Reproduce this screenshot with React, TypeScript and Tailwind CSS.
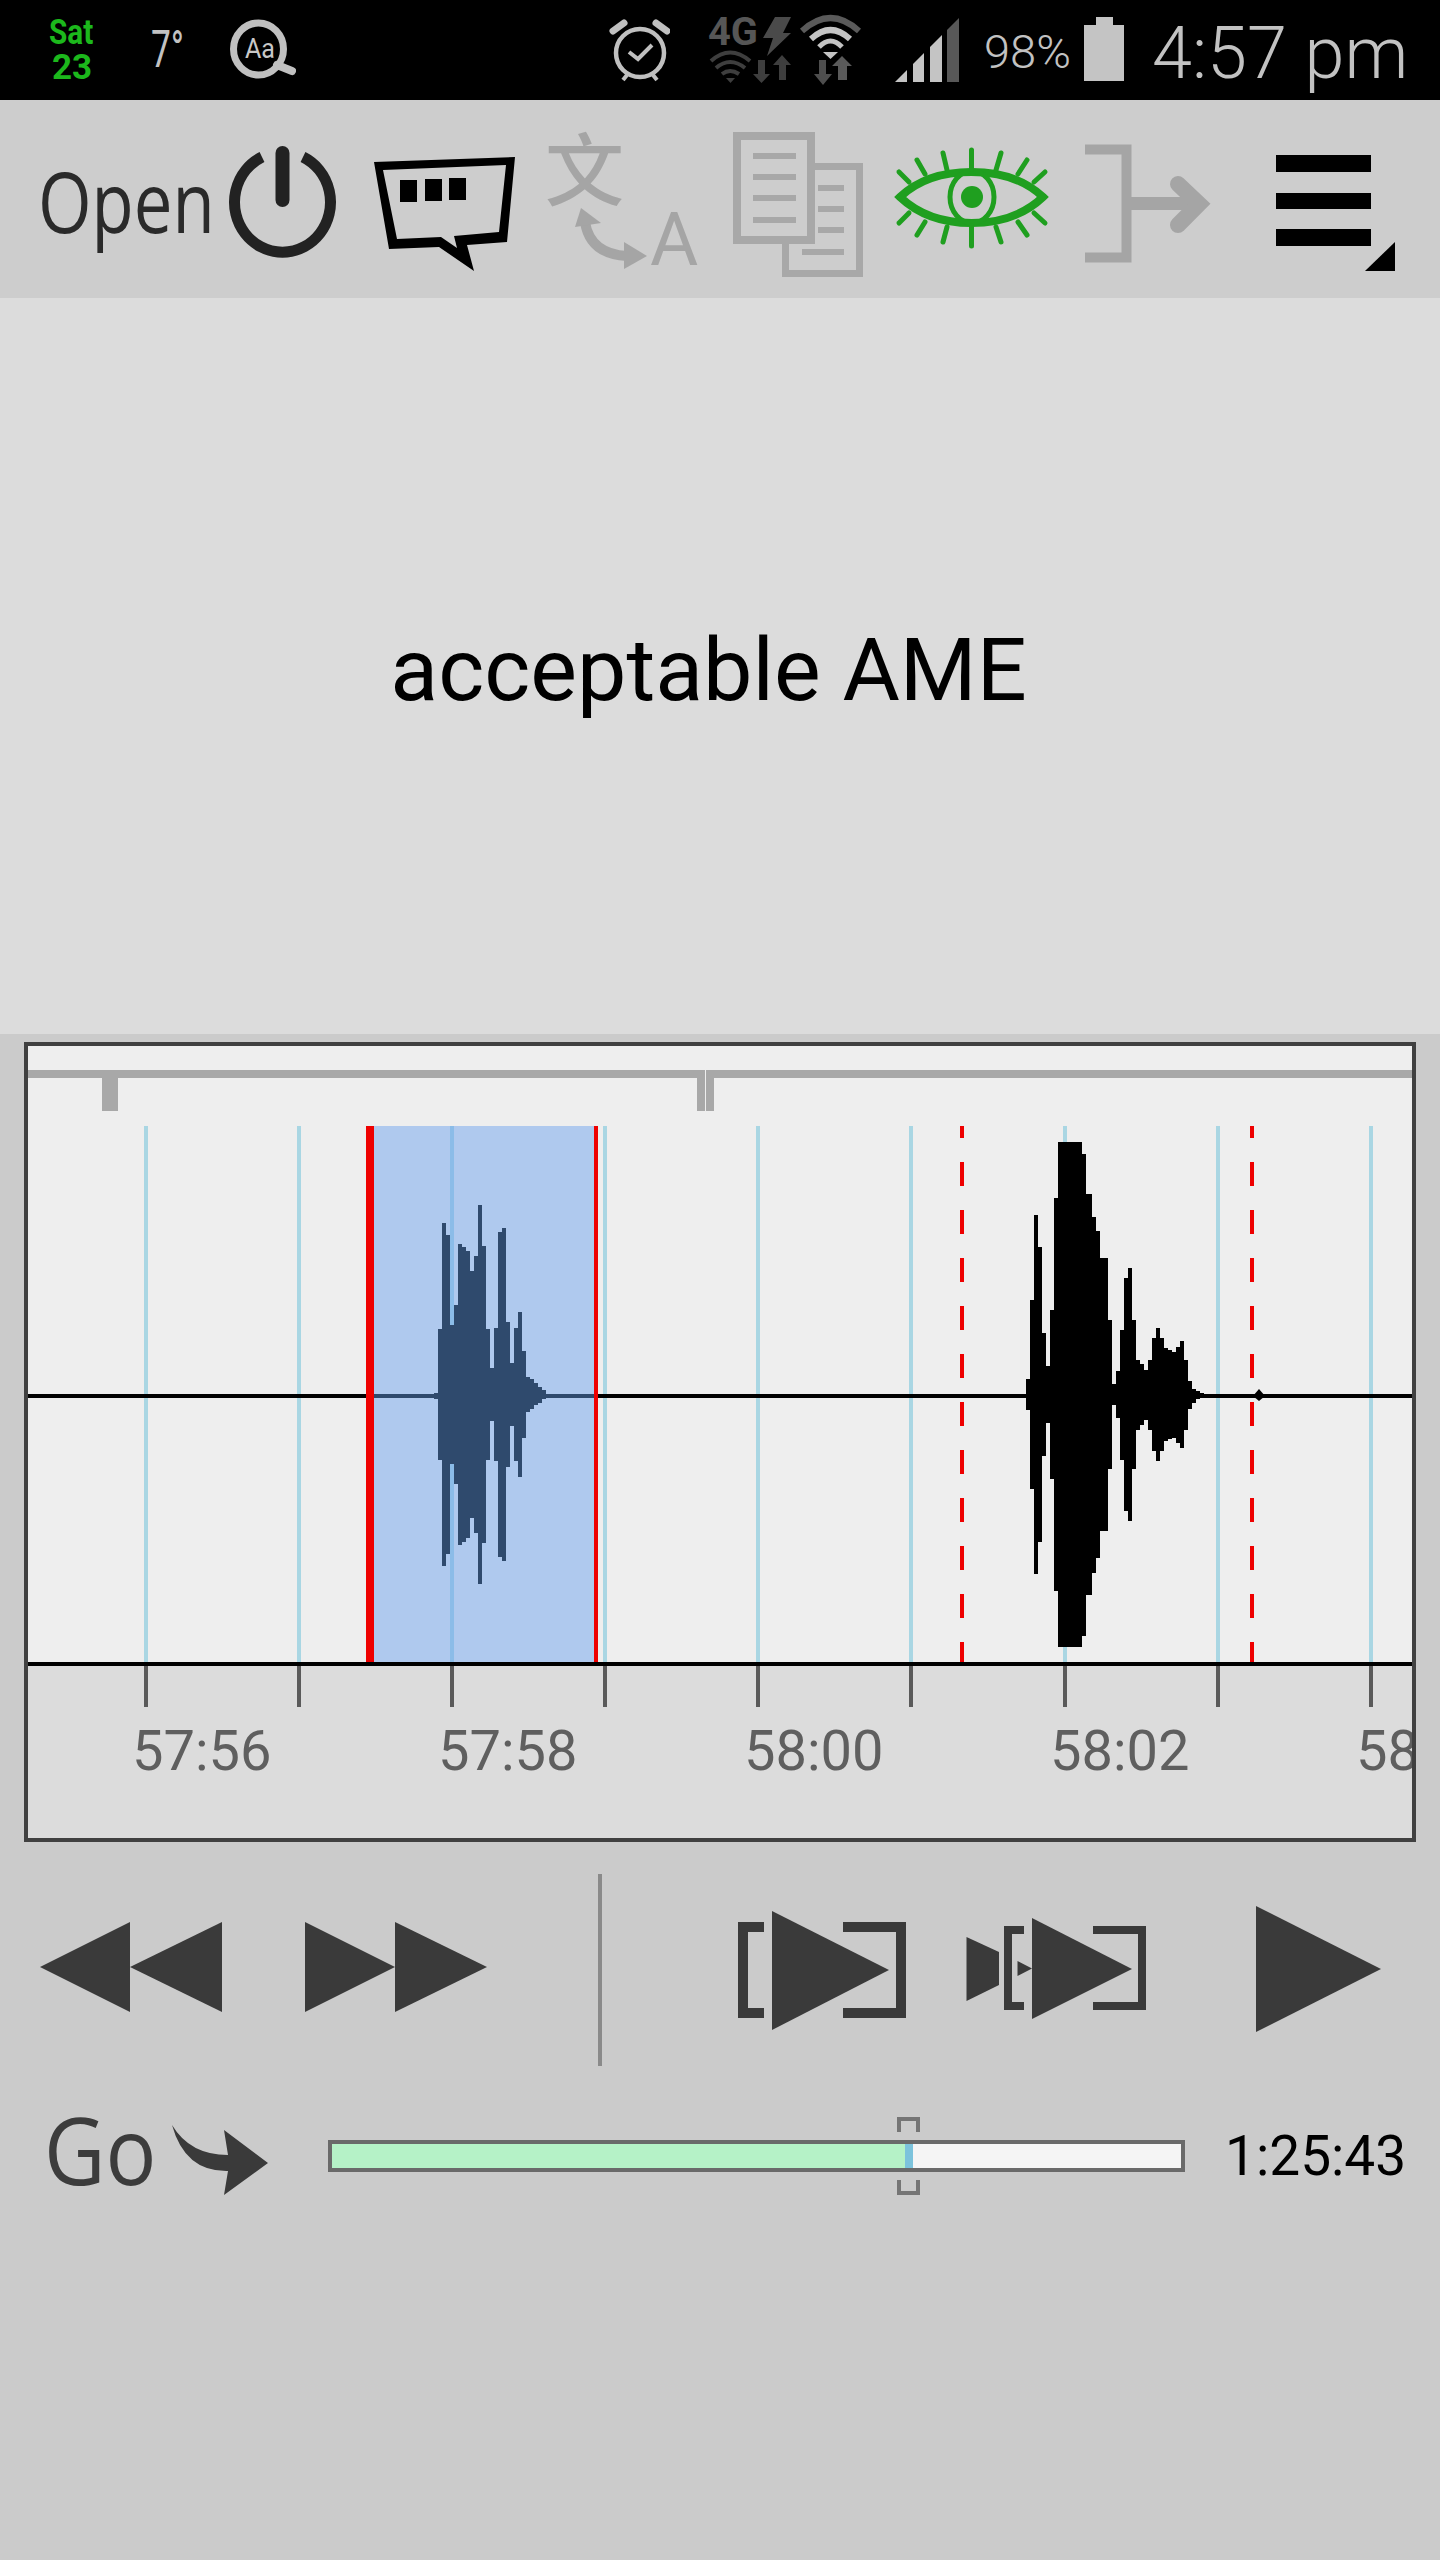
// svg icons use page coordinates in their viewBox, so numbers can be read straight off the screenshot
const gridX = [144, 297, 450, 603, 756, 909, 1063, 1216, 1369];

// [x, amplitude above centre, amplitude below centre], each column runs to the next x
const selectedWave: number[][] = [
  [434, 3, 3], [438, 67, 64], [442, 173, 170], [446, 161, 158], [450, 71, 68], [454, 91, 88],
  [458, 152, 149], [462, 149, 146], [466, 145, 142], [470, 125, 122], [474, 140, 137], [478, 191, 188],
  [482, 150, 147], [486, 67, 64], [490, 28, 25], [494, 68, 65], [498, 164, 161], [502, 168, 165],
  [506, 74, 71], [510, 33, 30], [514, 68, 65], [518, 84, 81], [522, 45, 42], [526, 19, 16],
  [530, 17, 13], [534, 13, 9], [538, 9, 7], [542, 6, 3], [546, 0, 0],
];

const blackWave: number[][] = [
  [1026, 17, 14], [1030, 96, 93], [1034, 181, 178], [1038, 149, 146], [1042, 63, 60], [1046, 30, 27],
  [1050, 86, 83], [1054, 198, 195], [1058, 254, 251], [1082, 242, 240], [1086, 202, 199], [1092, 179, 177],
  [1096, 165, 162], [1100, 138, 135], [1108, 76, 73], [1112, 12, 9], [1116, 25, 22], [1120, 66, 64],
  [1124, 118, 115], [1128, 128, 125], [1132, 76, 73], [1136, 36, 34], [1140, 32, 29], [1144, 26, 24],
  [1148, 36, 34], [1152, 58, 55], [1156, 68, 65], [1160, 58, 55], [1164, 48, 45], [1168, 46, 43],
  [1172, 44, 42], [1176, 49, 47], [1180, 55, 52], [1184, 36, 34], [1188, 15, 13], [1192, 7, 7],
  [1196, 5, 3], [1200, 3, 2], [1204, 0, 0],
];

const wavePoints = (cols: number[][]) => {
  const top: string[] = [];
  const bottom: string[] = [];
  cols.forEach((c, i) => {
    const end = i < cols.length - 1 ? cols[i + 1][0] : c[0];
    top.push(`${c[0]},${1396 - c[1]} ${end},${1396 - c[1]}`);
    bottom.unshift(`${end},${1396 + c[2]} ${c[0]},${1396 + c[2]}`);
  });
  return [...top, ...bottom].join(" ");
};

const labels = ["57:56", "57:58", "58:00", "58:02", "58:04"];
const roboto = "font-['Roboto',sans-serif]";

function StatusBar() {
  return (
    <div className={`flex h-[100px] items-stretch overflow-hidden bg-black text-[#c2c2c2] ${roboto}`}>
      <div className="ml-[49px] flex w-[44px] shrink-0 flex-col justify-center text-[35px] leading-[35px] font-bold text-[#1cb81c]">
        <span className="block origin-left scale-x-[.85]">Sat</span>
        <span className="ml-[3px] block">23</span>
      </div>
      <div className="ml-[58px] flex w-[30px] shrink-0 items-center text-[52px]">
        <span className="block origin-left scale-x-[.68]">7°</span>
      </div>
      <svg width="66" height="100" viewBox="230 0 66 100" className="ml-[49px] shrink-0">
        <ellipse cx="258.5" cy="49" rx="25" ry="26" fill="none" stroke="#c0c0c0" strokeWidth="7" />
        <line x1="277" y1="65" x2="292" y2="71" stroke="#c0c0c0" strokeWidth="8" strokeLinecap="round" />
        <text x="245" y="58" fontSize="27" fill="#c8c8c8" fontFamily="Roboto, sans-serif" textLength="30" lengthAdjust="spacingAndGlyphs">Aa</text>
      </svg>
      <svg width="62" height="100" viewBox="608 0 62 100" className="ml-[312px] shrink-0">
        <circle cx="640" cy="53" r="24" fill="none" stroke="#c0c0c0" strokeWidth="4.5" />
        <line x1="613" y1="31" x2="624" y2="23" stroke="#c0c0c0" strokeWidth="7" strokeLinecap="round" />
        <line x1="667" y1="31" x2="656" y2="23" stroke="#c0c0c0" strokeWidth="7" strokeLinecap="round" />
        <line x1="623" y1="80" x2="627" y2="75" stroke="#c0c0c0" strokeWidth="4" />
        <line x1="657" y1="80" x2="653" y2="75" stroke="#c0c0c0" strokeWidth="4" />
        <polyline points="629,52 638,59 652,45" fill="none" stroke="#c0c0c0" strokeWidth="4" />
      </svg>
      <svg width="86" height="100" viewBox="706 0 86 100" className="ml-[36px] shrink-0">
        <text x="708" y="45" fontSize="38" fontWeight="700" fill="#565656" fontFamily="Roboto, sans-serif" textLength="50" lengthAdjust="spacingAndGlyphs">4G</text>
        <polygon points="775,17 791,17 783,33 791,33 767,56 773,38 763,38" fill="#4a4a4a" />
        <path d="M711 61 Q730 44 750 61" fill="none" stroke="#3e3e3e" strokeWidth="4" />
        <path d="M716 68 Q730 56 745 68" fill="none" stroke="#3e3e3e" strokeWidth="4" />
        <path d="M722 74 Q730 68 739 74" fill="none" stroke="#3e3e3e" strokeWidth="4" />
        <polygon points="726,78 735,78 730.5,83" fill="#3e3e3e" />
        <polygon points="758,60 765,60 765,74 770,74 761.5,83 753,74 758,74" fill="#3e3e3e" />
        <polygon points="782,55 791,65 786,65 786,80 779,80 779,65 773,65" fill="#3e3e3e" />
      </svg>
      <svg width="70" height="100" viewBox="796 0 70 100" className="ml-[4px] shrink-0">
        <path d="M802 31 Q830.5 5 859 31" fill="none" stroke="#5a5a5a" strokeWidth="6" />
        <path d="M811 39 Q830.5 21 850 39" fill="none" stroke="#c4c4c4" strokeWidth="6" />
        <path d="M819 47 Q830.5 35 842 47" fill="none" stroke="#c4c4c4" strokeWidth="5" />
        <polygon points="823,52 838,52 830.5,59" fill="#c4c4c4" />
        <polygon points="819,60 826,60 826,74 832,74 823,85 814,74 819,74" fill="#4e4e4e" />
        <polygon points="842,56 852,66 847,66 847,80 838,80 838,66 832,66" fill="#5a5a5a" />
      </svg>
      <svg width="68" height="100" viewBox="893 0 68 100" className="ml-[27px] shrink-0">
        <polygon points="895,82 907,70 907,82" fill="#c4c4c4" />
        <polygon points="913,64 924,53 924,82 913,82" fill="#c4c4c4" />
        <polygon points="930,47 942,35 942,82 930,82" fill="#c4c4c4" />
        <polygon points="947,30 959,18 959,82 947,82" fill="#585858" />
      </svg>
      <div className="ml-[23px] flex w-[90px] shrink-0 items-center pt-[4px] text-[47px] font-light">98%</div>
      <svg width="44" height="100" viewBox="1082 0 44 100" className="ml-[8px] shrink-0">
        <polygon points="1096,17 1113,17 1113,25 1124,25 1124,81 1084,81 1084,25 1096,25" fill="#c4c4c4" />
      </svg>
      <div className="ml-[26px] flex shrink-0 items-center pt-[7px] text-[72px] font-light whitespace-nowrap">4:57 pm</div>
    </div>
  );
}

function Toolbar() {
  return (
    <div className="flex h-[198px] items-stretch bg-[#cdcdcd]">
      <div className="ml-[38px] flex w-[186px] shrink-0 items-center pt-[3px] font-['Open_Sans',sans-serif] text-[84px] font-medium text-[#2a2a2a]">
        <span className="block origin-left scale-x-[.82]">Open</span>
      </div>
      <svg width="116" height="198" viewBox="224 100 116 198" className="shrink-0">
        <path d="M262 157 A48 50 0 1 0 303 157" fill="none" stroke="#222222" strokeWidth="11" />
        <line x1="282.5" y1="153" x2="282.5" y2="200" stroke="#222222" strokeWidth="14" strokeLinecap="round" />
      </svg>
      <svg width="150" height="198" viewBox="370 100 150 198" className="ml-[30px] shrink-0">
        <path
          fillRule="evenodd"
          fill="#000000"
          d="M374 162 L515 157 L507 242 L467 245 L474 271 L439 247 L389 249 Z M383 170 L506 165 L499 232 L454 236 L457 248 L441 237 L397 239 Z"
        />
        <rect x="400" y="180" width="17" height="22" />
        <rect x="425" y="179" width="17" height="22" />
        <rect x="449" y="178" width="17" height="22" />
      </svg>
      <svg width="160" height="198" viewBox="540 100 160 198" className="ml-[20px] shrink-0">
        <text x="545" y="200" fontSize="79" fontWeight="500" fill="#a5a5a5" fontFamily="'Noto Sans CJK SC', sans-serif">文</text>
        <path d="M585 222 Q590 254 627 256" fill="none" stroke="#a5a5a5" strokeWidth="10" />
        <polygon points="575,227 581,208 601,223" fill="#a5a5a5" />
        <polygon points="624,242 647,256 624,269" fill="#a5a5a5" />
        <text x="650" y="265" fontSize="74" fill="#a5a5a5" fontFamily="Roboto, sans-serif">A</text>
      </svg>
      <svg width="140" height="198" viewBox="728 100 140 198" fill="#a8a8a8" className="ml-[28px] shrink-0">
        <rect x="785.5" y="166.5" width="74" height="107" fill="none" stroke="#a8a8a8" strokeWidth="7" />
        <rect x="737" y="136" width="74" height="104" fill="#cdcdcd" stroke="#a8a8a8" strokeWidth="8" />
        <rect x="753" y="153" width="43" height="6" />
        <rect x="753" y="174" width="43" height="6" />
        <rect x="753" y="195" width="43" height="6" />
        <rect x="753" y="217" width="43" height="6" />
        <rect x="818" y="185" width="26" height="6" />
        <rect x="818" y="206" width="26" height="6" />
        <rect x="818" y="227" width="26" height="6" />
        <rect x="802" y="249" width="42" height="6" />
      </svg>
      <svg width="157" height="198" viewBox="893 100 157 198" stroke="#1f9f1f" fill="none" className="ml-[25px] shrink-0">
        <path strokeWidth="8" d="M900 197 C920 178 945 172 971.5 172 C998 172 1023 178 1043 197 C1023 216 998 223 971.5 223 C945 223 920 216 900 197 Z" />
        <ellipse cx="972" cy="197" rx="22" ry="26" strokeWidth="5" />
        <circle cx="972" cy="197" r="11" fill="#1f9f1f" stroke="none" />
        <g strokeWidth="5" strokeLinecap="round">
          <line x1="899" y1="172" x2="909" y2="182" />
          <line x1="917" y1="160" x2="925" y2="174" />
          <line x1="943" y1="153" x2="947" y2="170" />
          <line x1="971.5" y1="150" x2="971.5" y2="169" />
          <line x1="1001" y1="153" x2="996" y2="170" />
          <line x1="1027" y1="160" x2="1018" y2="174" />
          <line x1="1045" y1="172" x2="1034" y2="182" />
          <line x1="899" y1="223" x2="909" y2="213" />
          <line x1="917" y1="235" x2="925" y2="222" />
          <line x1="943" y1="242" x2="947" y2="227" />
          <line x1="971.5" y1="246" x2="971.5" y2="226" />
          <line x1="1001" y1="242" x2="996" y2="227" />
          <line x1="1027" y1="235" x2="1018" y2="222" />
          <line x1="1045" y1="223" x2="1034" y2="213" />
        </g>
      </svg>
      <svg width="136" height="198" viewBox="1080 100 136 198" fill="none" stroke="#a5a5a5" className="ml-[30px] shrink-0">
        <polyline points="1085,149.5 1126.5,149.5 1126.5,257.5 1085,257.5" strokeWidth="10" />
        <line x1="1131" y1="203.5" x2="1195" y2="203.5" strokeWidth="13" />
        <polyline points="1178,184 1199,204 1178,225" strokeWidth="16" strokeLinecap="round" />
      </svg>
      <svg width="130" height="198" viewBox="1270 100 130 198" className="ml-[54px] shrink-0">
        <rect x="1276" y="155" width="95" height="17" />
        <rect x="1276" y="193" width="95" height="16" />
        <rect x="1276" y="229" width="95" height="17" />
        <polygon points="1395,242 1395,271 1365,271" />
      </svg>
    </div>
  );
}

function Timeline() {
  return (
    <div className="mt-[8px] ml-[24px] h-[800px] w-[1392px] border-4 border-[#404040] bg-[#dcdcdc]">
      <svg width="1384" height="672" viewBox="28 1046 1384 672">
        <rect x="28" y="1046" width="1384" height="616" fill="#eeeeee" />
        <rect x="28" y="1070" width="1384" height="8" fill="#a8a8a8" />
        <rect x="102" y="1078" width="16" height="33" fill="#a8a8a8" />
        <rect x="705" y="1070" width="1" height="8" fill="#eeeeee" />
        <rect x="697" y="1078" width="8" height="33" fill="#a8a8a8" />
        <rect x="706" y="1078" width="8" height="33" fill="#a8a8a8" />

        {gridX.map((x) => (
          <rect key={x} x={x} y="1126" width="4" height="536" fill="#a9d6e3" />
        ))}
        <rect x="28" y="1394" width="1384" height="4" fill="#000000" />

        <line x1="962" y1="1126" x2="962" y2="1662" stroke="#ee0000" strokeWidth="4" strokeDasharray="24 24" strokeDashoffset="12" />
        <line x1="1252" y1="1126" x2="1252" y2="1662" stroke="#ee0000" strokeWidth="4" strokeDasharray="24 24" strokeDashoffset="12" />
        <polygon points={wavePoints(blackWave)} fill="#000000" />
        <polygon points="1253,1396 1259,1389 1265,1396 1259,1401" fill="#000000" />

        <rect x="374" y="1126" width="220" height="536" fill="#afc9ee" />
        <rect x="450" y="1126" width="4" height="536" fill="#8bbce8" />
        <rect x="374" y="1394" width="220" height="4" fill="#2f4a6d" />
        <polygon points={wavePoints(selectedWave)} fill="#2f4a6d" />
        <rect x="366" y="1126" width="8" height="536" fill="#ee0000" />
        <rect x="594" y="1126" width="4" height="536" fill="#ee0000" />

        <rect x="28" y="1662" width="1384" height="4" fill="#000000" />
        {gridX.map((x) => (
          <rect key={x} x={x} y="1666" width="4" height="41" fill="#5a5a5a" />
        ))}
      </svg>
      <div className={`flex h-[66px] overflow-hidden pl-[104px] text-[56px] leading-[66px] text-[#5f5f5f] ${roboto}`}>
        {labels.map((l) => (
          <span key={l} className="w-[306px] shrink-0">{l}</span>
        ))}
      </div>
    </div>
  );
}

function Transport() {
  return (
    <div className="flex h-[248px] items-stretch">
      <svg width="182" height="248" viewBox="40 1842 182 248" fill="#3a3a3a" className="ml-[40px] shrink-0">
        <polygon points="40,1967 130,1922 130,2012" />
        <polygon points="130,1967 222,1922 222,2012" />
      </svg>
      <svg width="182" height="248" viewBox="305 1842 182 248" fill="#3a3a3a" className="ml-[83px] shrink-0">
        <polygon points="305,1922 395,1967 305,2012" />
        <polygon points="395,1922 487,1967 395,2012" />
      </svg>
      <div className="mt-[32px] ml-[111px] h-[192px] w-[4px] shrink-0 bg-[#8a8a8a]" />
      <svg width="168" height="248" viewBox="738 1842 168 248" fill="#3a3a3a" className="ml-[136px] shrink-0">
        <polygon points="738,1922 764,1922 764,1932 748,1932 748,2008 764,2008 764,2018 738,2018" />
        <polygon points="843,1922 906,1922 906,2018 843,2018 843,2008 896,2008 896,1932 843,1932" />
        <polygon points="772,1911 889,1970 772,2030" />
      </svg>
      <svg width="180" height="248" viewBox="966 1842 180 248" fill="#3a3a3a" className="ml-[60px] shrink-0">
        <polygon points="966.5,1937 999,1952 999,1985 966.5,2001" />
        <polygon points="1004,1926 1024,1926 1024,1934 1012,1934 1012,2002 1024,2002 1024,2010 1004,2010" />
        <polygon points="1017.5,1961 1032,1968.5 1017.5,1976" />
        <polygon points="1093,1926 1146,1926 1146,2010 1093,2010 1093,2002 1138,2002 1138,1934 1093,1934" />
        <polygon points="1032,1918 1132,1969 1032,2019" />
      </svg>
      <svg width="125" height="248" viewBox="1256 1842 125 248" fill="#3a3a3a" className="ml-[110px] shrink-0">
        <polygon points="1256,1906 1381,1969 1256,2032" />
      </svg>
    </div>
  );
}

function GoRow() {
  return (
    <div className="flex h-[132px] items-center">
      <div className="mb-[14px] ml-[44px] w-[126px] shrink-0 font-['Open_Sans',sans-serif] text-[94px] font-medium text-[#3c3c3c]">
        <span className="block origin-left scale-x-[.9]">Go</span>
      </div>
      <svg width="100" height="132" viewBox="170 2090 100 132" fill="#3a3a3a" className="shrink-0">
        <path d="M172 2125 Q190 2155 228 2155 L224 2130 L268 2163 L224 2195 L228 2171 Q185 2172 172 2125 Z" />
      </svg>
      <div className="relative ml-[58px] h-[32px] w-[857px] shrink-0">
        <div className="flex h-full border-4 border-[#6a6a6a]">
          <div className="w-[573px] bg-[#b5f2c7]" />
          <div className="w-[8px] bg-[#7cc3dc]" />
          <div className="flex-1 bg-[#f5f5f5]" />
        </div>
        <div className="absolute top-[-23px] left-[569px] h-[15px] w-[23px] border-4 border-b-0 border-[#757575]" />
        <div className="absolute top-[40px] left-[569px] h-[15px] w-[23px] border-4 border-t-0 border-[#757575]" />
      </div>
      <div className={`ml-[40px] text-[55px] text-black ${roboto}`}>1:25:43</div>
    </div>
  );
}

export default function App() {
  return (
    <div className="h-[2560px] w-[1440px] overflow-hidden bg-[#cbcbcb]">
      <StatusBar />
      <Toolbar />
      <div className={`flex h-[736px] items-center justify-center bg-[#dcdcdc] pt-[8px] pr-[23px] text-[88px] text-black ${roboto}`}>
        acceptable AME
      </div>
      <Timeline />
      <Transport />
      <GoRow />
    </div>
  );
}
